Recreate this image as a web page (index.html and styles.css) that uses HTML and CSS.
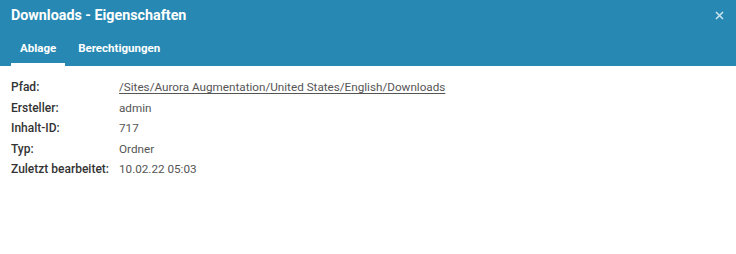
FILE: index.html
```html
<!DOCTYPE html>
<html>

<head>
    <meta charset="utf-8">
    <title>Downloads - Eigenschaften</title>
    <link rel="stylesheet" href="styles.css">
</head>

<body>
    <div class="dialog">
        <header class="head">
            <div class="titlebar">
                <h1 class="title">Downloads - Eigenschaften</h1>
                <button class="close" title="Schließen">
                    <svg width="9" height="9" viewBox="0 0 9 9">
                        <path d="M1 1L8 8M8 1L1 8" stroke="#c9e3ef" stroke-width="1.6" fill="none"/>
                    </svg>
                </button>
            </div>
            <nav class="tabs">
                <a class="tab active">Ablage</a>
                <a class="tab">Berechtigungen</a>
            </nav>
        </header>
        <section class="props">
            <div class="row">
                <span class="label">Pfad:</span>
                <a class="value link">/Sites/Aurora Augmentation/United States/English/Downloads</a>
            </div>
            <div class="row">
                <span class="label">Ersteller:</span>
                <span class="value">admin</span>
            </div>
            <div class="row">
                <span class="label">Inhalt-ID:</span>
                <span class="value">717</span>
            </div>
            <div class="row">
                <span class="label">Typ:</span>
                <span class="value">Ordner</span>
            </div>
            <div class="row">
                <span class="label">Zuletzt bearbeitet:</span>
                <span class="value">10.02.22 05:03</span>
            </div>
        </section>
    </div>
</body>

</html>
```

FILE: styles.css
```css
body {
    margin: 0;
    font-family: Roboto, "Liberation Sans", sans-serif;
    background: #fff;
}

.head {
    background-color: #2789b3;
    color: #fff;
}

.titlebar {
    display: flex;
    justify-content: space-between;
    align-items: center;
    height: 30px;
    padding: 0 11px;
}

.title {
    margin: 0;
    font-size: 14.3px;
    font-weight: 700;
}

.close {
    background: none;
    border: 0;
    padding: 0;
    margin-right: 1px;
    display: flex;
}

.tabs {
    display: flex;
    gap: 4px;
    padding: 6px 11px 0;
}

.tab {
    font-size: 11.5px;
    font-weight: 700;
    padding: 5px 9px 8px;
    border-bottom: 3px solid transparent;
}

.tab.active {
    border-bottom-color: #fff;
}

.props {
    padding: 11px 11px;
}

.row {
    display: flex;
    font-size: 12px;
    line-height: 20.5px;
}

.label {
    width: 108px;
    color: #333;
    font-weight: 500;
}

.value {
    color: #555;
    font-size: 11.7px;
}

.link {
    text-decoration: underline;
    text-underline-offset: 2px;
}
```
